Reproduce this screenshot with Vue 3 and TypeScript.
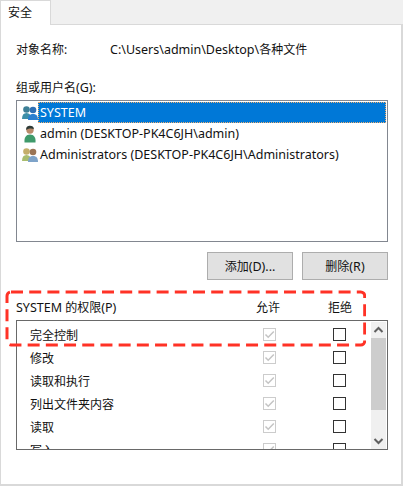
<script setup lang="ts">
const users = [
  { name: 'SYSTEM', icon: 'sys', selected: true },
  { name: 'admin (DESKTOP-PK4C6JH\\admin)', icon: 'user', selected: false },
  { name: 'Administrators (DESKTOP-PK4C6JH\\Administrators)', icon: 'admins', selected: false },
]
const perms = ['完全控制', '修改', '读取和执行', '列出文件夹内容', '读取', '写入']
</script>

<template>
  <div class="root">
    <div class="tabs">
      <div class="tab">安全</div>
    </div>
    <div class="panel">
      <div class="object">
        <span class="obj-label">对象名称:</span>
        <span><span class="lat">C:\Users\admin\Desktop\</span>各种文件</span>
      </div>
      <div class="group-label">组或用户名<span class="lat">(G):</span></div>
      <div class="userlist">
        <div v-for="u in users" :key="u.name" class="user">
          <svg class="uicon" width="16" height="18" viewBox="0 0 16 18">
            <template v-if="u.icon === 'sys'">
              <circle cx="4.500" cy="5.500" r="3.300" fill="#3d7f96" />
              <path d="M0 15c0-4 1.500-6 4.500-6S9 11 9 15z" fill="#3d8fa8" />
              <circle cx="11" cy="6" r="3.300" fill="#2f6fb4" />
              <path d="M6 16c0-4 1.500-6 5-6s5 2 5 6z" fill="#2b7fd0" />
            </template>
            <template v-else-if="u.icon === 'user'">
              <circle cx="8" cy="5" r="3.700" fill="#b98a6a" />
              <path d="M4.200 5C4 1.500 6 .8 8 .8s4 .9 3.800 3.400C10 3.200 7 3.200 4.200 5z" fill="#2d3a36" />
              <path d="M2.500 17.500c-.5-5 1.500-8 5.500-8s6 3 5.500 8z" fill="#3f9a6b" />
            </template>
            <template v-else>
              <circle cx="4.500" cy="5.500" r="3.300" fill="#c4ae6a" />
              <path d="M0 15c0-4 1.500-6 4.500-6S9 11 9 15z" fill="#a9bd6e" />
              <circle cx="11" cy="6" r="3.300" fill="#9a7454" />
              <path d="M6 16c0-4 1.500-6 5-6s5 2 5 6z" fill="#7ea3c9" />
            </template>
          </svg>
          <span class="uname lat" :class="{ selected: u.selected }">{{ u.name }}</span>
        </div>
      </div>
      <div class="buttons">
        <button class="btn">添加<span class="lat">(D)...</span></button>
        <button class="btn">删除<span class="lat">(R)</span></button>
      </div>
      <div class="perm-head">
        <span class="perm-title"><span class="lat">SYSTEM</span> 的权限<span class="lat">(P)</span></span>
        <span class="col">允许</span>
        <span class="col">拒绝</span>
      </div>
      <div class="permlist">
        <div class="rows">
          <div v-for="p in perms" :key="p" class="row">
            <span class="pname">{{ p }}</span>
            <span class="cell">
              <span class="cb disabled">
                <svg width="11" height="11" viewBox="0 0 11 11">
                  <path d="M1.500 5.500 4.200 8.200 9.800 2.500" fill="none" stroke="#c4c4c4" stroke-width="1.500" />
                </svg>
              </span>
            </span>
            <span class="cell"><span class="cb"></span></span>
          </div>
        </div>
        <div class="scrollbar">
          <svg class="arrow" width="15" height="16" viewBox="0 0 15 16">
            <path d="M3.500 10 7.500 6 11.500 10" fill="none" stroke="#606060" stroke-width="2" />
          </svg>
          <div class="thumb"></div>
          <div class="track"></div>
          <svg class="arrow" width="15" height="16" viewBox="0 0 15 16">
            <path d="M3.500 6 7.500 10 11.500 6" fill="none" stroke="#606060" stroke-width="2" />
          </svg>
        </div>
      </div>
      <svg class="highlight" width="362" height="60" viewBox="0 0 362 60">
        <rect x="3" y="2" width="357.700" height="53" rx="4" fill="none" stroke="#ff3226" stroke-width="3" stroke-dasharray="12 6.200" />
      </svg>
    </div>
  </div>
</template>

<style scoped>
.root {
  width: 405px;
  height: 487px;
  background: #fff;
  font-family: "Noto Sans", "Noto Sans CJK SC", sans-serif;
  font-size: 12px;
  color: #111;
  display: flex;
  flex-direction: column;
  overflow: hidden;
}
.lat {
  font-size: 12.5px;
}
.tabs {
  height: 24px;
  background: #f0f0f0;
  display: flex;
  flex: none;
  width: 403px;
}
.tab {
  width: 51px;
  box-sizing: border-box;
  height: 25px;
  background: #fff;
  border: 1px solid #d9d9d9;
  border-bottom: 0;
  padding: 2px 0 0 7px;
  position: relative;
  z-index: 1;
}
.panel {
  position: relative;
  width: 403px;
  height: 462px;
  box-sizing: border-box;
  border: 1px solid #d9d9d9;
  border-width: 1px 2px 2px 1px;
  padding: 0 13px 0 15px;
}
.object {
  display: flex;
  margin-top: 16px;
  height: 18px;
  line-height: 18px;
}
.obj-label {
  width: 94px;
  flex: none;
}
.group-label {
  margin-top: 20px;
  height: 18px;
  line-height: 18px;
}
.userlist {
  margin-top: 3px;
  height: 142px;
  box-sizing: border-box;
  border: 1px solid #828790;
  padding: 1px 1px;
}
.user {
  height: 21px;
  display: flex;
  align-items: center;
  padding-left: 4px;
}
.uicon {
  flex: none;
}
.uname {
  padding-left: 2px;
  height: 21px;
  line-height: 21px;
  flex: 1;
}
.uname.selected {
  background: #0078d7;
  color: #fff;
  outline: 1px dotted #f0b070;
  outline-offset: -1px;
}
.buttons {
  margin-top: 10px;
  display: flex;
  justify-content: flex-end;
  gap: 9px;
}
.btn {
  width: 86px;
  height: 28px;
  background: #e1e1e1;
  border: 1px solid #adadad;
  font: inherit;
  color: #111;
  padding: 0;
}
.perm-head {
  margin-top: 18px;
  display: flex;
  height: 20px;
  line-height: 20px;
}
.perm-title {
  width: 240px;
  flex: none;
}
.col {
  width: 72px;
  flex: none;
}
.permlist {
  margin-top: 2px;
  height: 130px;
  box-sizing: border-box;
  border: 1px solid #696969;
  display: flex;
  overflow: hidden;
}
.rows {
  flex: 1;
  padding-top: 2px;
  overflow: hidden;
}
.row {
  height: 23px;
  display: flex;
  align-items: center;
  padding-left: 13px;
}
.pname {
  width: 233px;
  flex: none;
}
.cell {
  width: 70px;
  flex: none;
  display: flex;
}
.cb {
  width: 13px;
  height: 13px;
  box-sizing: border-box;
  border: 1px solid #333;
  display: flex;
  align-items: center;
  justify-content: center;
}
.cb.disabled {
  border-color: #ccc;
}
.scrollbar {
  width: 15px;
  margin: 1px 1px 0 0;
  background: #f0f0f0;
  display: flex;
  flex-direction: column;
  flex: none;
}
.arrow {
  flex: none;
}
.thumb {
  height: 72px;
  background: #cdcdcd;
}
.track {
  flex: 1;
}
.highlight {
  position: absolute;
  left: 3px;
  top: 265px;
  pointer-events: none;
}
</style>
